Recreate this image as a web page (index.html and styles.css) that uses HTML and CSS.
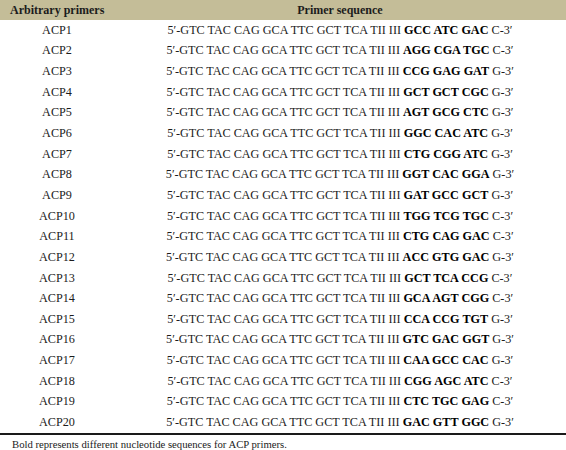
FILE: index.html
```html
<!DOCTYPE html>
<html lang="en">
<head>
    <meta charset="UTF-8">
    <title>Arbitrary primers</title>
    <link rel="stylesheet" href="styles.css">
</head>
<body>
    <table class="primers">
        <thead>
            <tr>
                <th class="col-name">Arbitrary primers</th>
                <th class="col-seq">Primer sequence</th>
            </tr>
        </thead>
        <tbody>
            <tr><td>ACP1</td><td>5′-GTC TAC CAG GCA TTC GCT TCA TII III <b>GCC ATC GAC</b> C-3′</td></tr>
            <tr><td>ACP2</td><td>5′-GTC TAC CAG GCA TTC GCT TCA TII III <b>AGG CGA TGC</b> C-3′</td></tr>
            <tr><td>ACP3</td><td>5′-GTC TAC CAG GCA TTC GCT TCA TII III <b>CCG GAG GAT</b> G-3′</td></tr>
            <tr><td>ACP4</td><td>5′-GTC TAC CAG GCA TTC GCT TCA TII III <b>GCT GCT CGC</b> G-3′</td></tr>
            <tr><td>ACP5</td><td>5′-GTC TAC CAG GCA TTC GCT TCA TII III <b>AGT GCG CTC</b> G-3′</td></tr>
            <tr><td>ACP6</td><td>5′-GTC TAC CAG GCA TTC GCT TCA TII III <b>GGC CAC ATC</b> G-3′</td></tr>
            <tr><td>ACP7</td><td>5′-GTC TAC CAG GCA TTC GCT TCA TII III <b>CTG CGG ATC</b> G-3′</td></tr>
            <tr><td>ACP8</td><td>5′-GTC TAC CAG GCA TTC GCT TCA TII III <b>GGT CAC GGA</b> G-3′</td></tr>
            <tr><td>ACP9</td><td>5′-GTC TAC CAG GCA TTC GCT TCA TII III <b>GAT GCC GCT</b> G-3′</td></tr>
            <tr><td>ACP10</td><td>5′-GTC TAC CAG GCA TTC GCT TCA TII III <b>TGG TCG TGC</b> C-3′</td></tr>
            <tr><td>ACP11</td><td>5′-GTC TAC CAG GCA TTC GCT TCA TII III <b>CTG CAG GAC</b> C-3′</td></tr>
            <tr><td>ACP12</td><td>5′-GTC TAC CAG GCA TTC GCT TCA TII III <b>ACC GTG GAC</b> G-3′</td></tr>
            <tr><td>ACP13</td><td>5′-GTC TAC CAG GCA TTC GCT TCA TII III <b>GCT TCA CCG</b> C-3′</td></tr>
            <tr><td>ACP14</td><td>5′-GTC TAC CAG GCA TTC GCT TCA TII III <b>GCA AGT CGG</b> C-3′</td></tr>
            <tr><td>ACP15</td><td>5′-GTC TAC CAG GCA TTC GCT TCA TII III <b>CCA CCG TGT</b> G-3′</td></tr>
            <tr><td>ACP16</td><td>5′-GTC TAC CAG GCA TTC GCT TCA TII III <b>GTC GAC GGT</b> G-3′</td></tr>
            <tr><td>ACP17</td><td>5′-GTC TAC CAG GCA TTC GCT TCA TII III <b>CAA GCC CAC</b> G-3′</td></tr>
            <tr><td>ACP18</td><td>5′-GTC TAC CAG GCA TTC GCT TCA TII III <b>CGG AGC ATC</b> C-3′</td></tr>
            <tr><td>ACP19</td><td>5′-GTC TAC CAG GCA TTC GCT TCA TII III <b>CTC TGC GAG</b> C-3′</td></tr>
            <tr><td>ACP20</td><td>5′-GTC TAC CAG GCA TTC GCT TCA TII III <b>GAC GTT GGC</b> G-3′</td></tr>
        </tbody>
    </table>
    <p class="note">Bold represents different nucleotide sequences for ACP primers.</p>
</body>
</html>
```

FILE: styles.css
```css
body {
    margin: 0;
    font-family: "Liberation Serif", "Times New Roman", serif;
    color: #1c1c1c;
    background: #fff;
}
.primers {
    width: 566px;
    border-collapse: collapse;
    font-size: 12.2px;
}
.primers thead tr {
    background-color: #c4bd98;
}
.primers th {
    height: 20px;
    padding: 0;
    font-size: 12px;
    font-weight: bold;
    text-align: center;
}
.primers th.col-name {
    width: 104px;
    padding-left: 10px;
    text-align: left;
}
.primers td {
    height: 20.65px;
    padding: 0;
    text-align: center;
}
.primers b {
    color: #000;
}
.primers tbody tr:last-child td {
    border-bottom: 2px solid #1a1a1a;
}
.note {
    margin: 3px 0 0 12px;
    font-size: 10.7px;
}
```
